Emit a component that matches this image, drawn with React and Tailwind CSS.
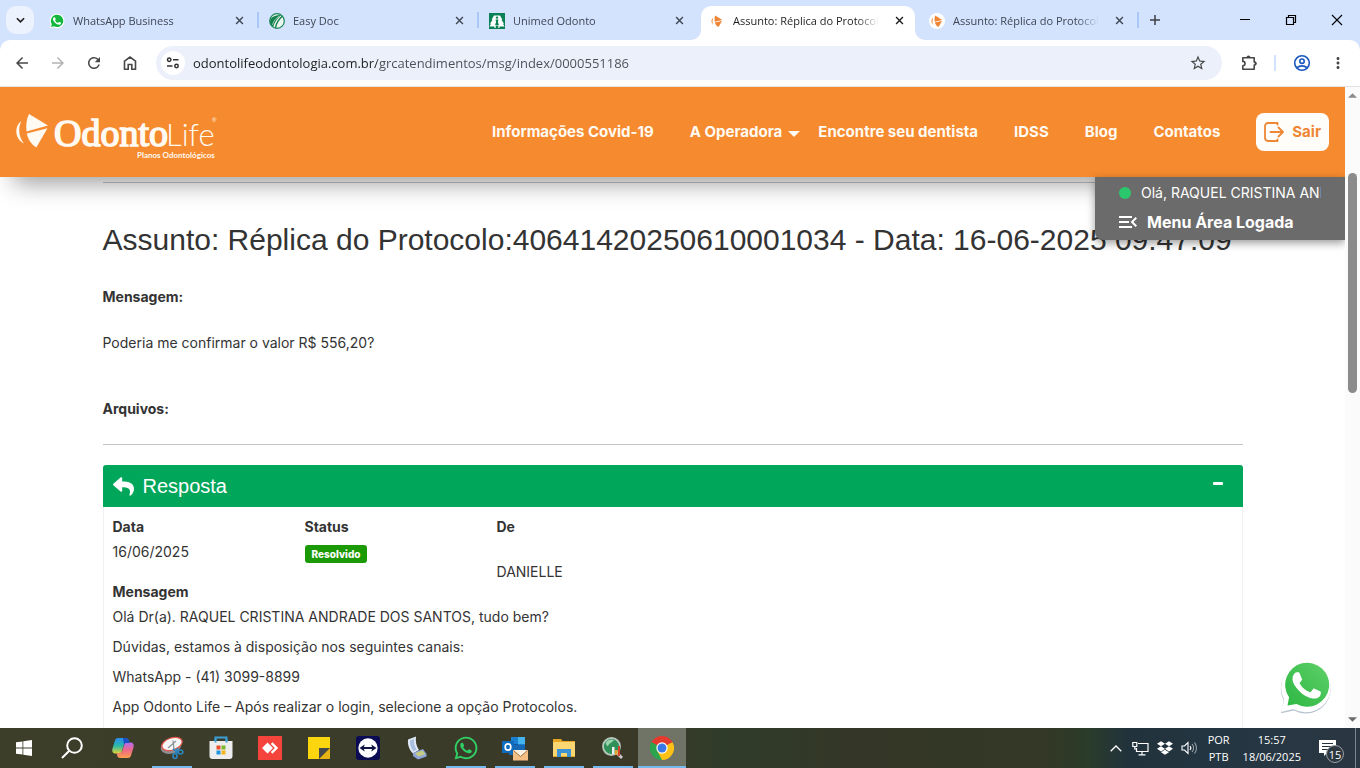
import React from "react";
import { MdArrowBack, MdArrowForward, MdRefresh, MdStarBorder, MdMoreVert, MdMenuOpen } from "react-icons/md";
import { FaReply, FaWhatsapp, FaDropbox } from "react-icons/fa";

const PHONE =
  "M17.472 14.382c-.297-.149-1.758-.867-2.03-.967-.273-.099-.471-.148-.67.15-.197.297-.767.966-.94 1.164-.173.199-.347.223-.644.075-.297-.15-1.255-.463-2.39-1.475-.883-.788-1.48-1.761-1.653-2.059-.173-.297-.018-.458.13-.606.134-.133.298-.347.446-.52.149-.174.198-.298.298-.497.099-.198.05-.371-.025-.52-.075-.149-.669-1.612-.916-2.207-.242-.579-.487-.5-.669-.51-.173-.008-.371-.01-.57-.01-.198 0-.52.074-.792.372-.272.297-1.04 1.016-1.04 2.479 0 1.462 1.065 2.875 1.213 3.074.149.198 2.096 3.2 5.077 4.487.709.306 1.262.489 1.694.625.712.227 1.36.195 1.871.118.571-.085 1.758-.719 2.006-1.413.248-.694.248-1.289.173-1.413-.074-.124-.272-.198-.57-.347";

function WhatsFavicon() {
  return (
    <svg viewBox="0 0 24 24" className="size-4 shrink-0">
      <path d="M1 23l1.6-5.6A11 11 0 1 1 6.6 21.400z" fill="#fff" />
      <path d="M3 21l1.200-4.300A9.300 9.300 0 1 1 7.400 19.800z" fill="#12b83e" />
      <path d={PHONE} fill="#fff" />
    </svg>
  );
}

function EasyFavicon() {
  return (
    <svg viewBox="0 0 16 16" className="size-4 shrink-0">
      <circle cx="8" cy="8" r="7.300" fill="#eaf5ef" stroke="#1c8756" strokeWidth="1.200" />
      <path d="M1 9C1 4 6 2 12 2C9 5 6 8 4.500 13.500C2 13 1 11 1 9z" fill="#14804c" />
      <path d="M13.500 3C10 6 7.500 9 6.500 14.800" stroke="#14804c" strokeWidth="1.500" fill="none" />
      <path d="M10.500 3C7 5 4.500 8 3.500 12" stroke="#b9dfcb" strokeWidth=".8" fill="none" />
    </svg>
  );
}

function UnimedFavicon() {
  return (
    <svg viewBox="0 0 16 16" className="size-4 shrink-0">
      <path d="M0 0h16v16H0z" fill="#0a8055" />
      <path d="M5 2.500h6l2.300 4-.8.400L15 10.500l-1 .3 1.500 2.700h-5V15h-5v-1.500h-5L2 10.800l-1-.3L3.500 6.900l-.8-.4z" fill="#fff" />
      <circle cx="8" cy="4.600" r="1.200" fill="#0a8055" />
      <path d="M6.500 6.500h3l-.6 2.500 1 3H6.100l1-3z" fill="#0a8055" />
      <path d="M6.700 12.500h2.600V15H6.700z" fill="#0a8055" />
    </svg>
  );
}

function ToothFavicon() {
  return (
    <svg viewBox="0 0 16 16" className="size-4 shrink-0">
      <circle cx="8" cy="8" r="8" fill="#fff" />
      <path d="M4.300 4.500C1.800 6.800 2 9.500 4 12C3.300 9.500 3.300 7 4.300 4.500z" fill="#ee8434" />
      <path d="M6.200 2.600L13.300 7 5.800 8.700C5.400 6.500 5.500 4.500 6.200 2.600z" fill="#ee8434" />
      <path d="M5.900 9.400L13 7.900 9.500 14C7.700 13 6.500 11.500 5.900 9.400z" fill="#ee8434" />
    </svg>
  );
}

function Cross({ className }) {
  return (
    <svg viewBox="0 0 10 10" className={className}>
      <path d="M1.200 1.200l7.600 7.600M8.800 1.200L1.200 8.800" stroke="currentColor" strokeWidth="1.600" fill="none" />
    </svg>
  );
}

const tabs = [
  { title: "WhatsApp Business", icon: <WhatsFavicon />, line: true },
  { title: "Easy Doc", icon: <EasyFavicon />, line: true },
  { title: "Unimed Odonto", icon: <UnimedFavicon /> },
  { title: "Assunto: Réplica do Protocolo", icon: <ToothFavicon />, active: true },
  { title: "Assunto: Réplica do Protocolo", icon: <ToothFavicon />, line: true },
];

function Tab({ tab }) {
  return (
    <>
      <div
        className={
          "relative flex h-[34px] w-[214px] min-w-0 items-center rounded-t-[10px] pb-[5px] pl-2 pr-[10px] " +
          (tab.active ? "bg-white text-[#1f1f1f]" : "text-[#3f4654]")
        }
      >
        {tab.active && (
          <>
            <svg viewBox="0 0 10 10" className="absolute -left-[10px] bottom-0 size-[10px]">
              <path d="M10 0v10H0A10 10 0 0 0 10 0z" fill="#fff" />
            </svg>
            <svg viewBox="0 0 10 10" className="absolute -right-[10px] bottom-0 size-[10px]">
              <path d="M0 0v10h10A10 10 0 0 1 0 0z" fill="#fff" />
            </svg>
          </>
        )}
        {tab.icon}
        <span className="ml-2 min-w-0 flex-1 overflow-hidden whitespace-nowrap [mask-image:linear-gradient(to_right,black_124px,transparent_146px)]">
          {tab.title}
        </span>
        <button type="button" aria-label="Fechar guia" className="ml-2 flex size-3 items-center justify-center">
          <Cross className="size-[9px]" />
        </button>
      </div>
      <div className="flex h-[34px] w-[6px] shrink-0 justify-center pt-[6px]">
        {tab.line && <span className="h-4 w-[2px] bg-[#a9c7f8]" />}
      </div>
    </>
  );
}

function BrowserChrome() {
  return (
    <div className="shrink-0 bg-[#d3e2fd] font-['Open_Sans',sans-serif]">
      <div className="flex h-10 items-start pl-[6px] pt-[6px] text-[11px] leading-4">
        <button type="button" aria-label="Pesquisar guias" className="mr-[7px] flex size-7 shrink-0 items-center justify-center rounded-[10px] bg-[#ecf2fe]">
          <svg viewBox="0 0 10 6" className="h-[6px] w-[9px]">
            <path d="M1 1l4 4 4-4" fill="none" stroke="#1f1f1f" strokeWidth="1.800" />
          </svg>
        </button>
        {tabs.map((t, i) => (
          <Tab key={i} tab={t} />
        ))}
        <button type="button" aria-label="Nova guia" className="ml-2 mt-2 flex size-3 shrink-0 items-center justify-center text-[#3c4043]">
          <svg viewBox="0 0 12 12" className="size-3">
            <path d="M6 1v10M1 6h10" stroke="currentColor" strokeWidth="1.500" />
          </svg>
        </button>
        <div className="ml-auto flex pt-2 text-black">
          <button type="button" aria-label="Minimizar" className="flex h-3 w-[46px] items-center justify-center">
            <svg viewBox="0 0 12 12" className="size-3"><path d="M1 5.500h10" stroke="currentColor" /></svg>
          </button>
          <button type="button" aria-label="Restaurar" className="flex h-3 w-[46px] items-center justify-center">
            <svg viewBox="0 0 12 12" className="size-3" fill="none" stroke="currentColor" strokeWidth="1.200">
              <path d="M1.500 3.500h7v7h-7zM3.500 3.500v-2h7v7h-2" />
            </svg>
          </button>
          <button type="button" aria-label="Fechar" className="flex h-3 w-[46px] items-center justify-center">
            <svg viewBox="0 0 12 12" className="size-3" fill="none" stroke="currentColor" strokeWidth="1.100">
              <path d="M1 1l10 10M11 1L1 11" />
            </svg>
          </button>
        </div>
      </div>

      <div className="flex h-[47px] items-center rounded-t-[10px] border-b border-[#e3e3e3] bg-white pl-[13px] pr-[13px] text-[#474747]">
        <button type="button" aria-label="Voltar"><MdArrowBack className="size-[18px]" /></button>
        <button type="button" aria-label="Avançar" className="ml-[18px] text-[#b3b3b3]"><MdArrowForward className="size-[18px]" /></button>
        <button type="button" aria-label="Recarregar" className="ml-[18px]"><MdRefresh className="size-[18px]" /></button>
        <button type="button" aria-label="Página inicial" className="ml-[18px]">
          <svg viewBox="0 0 18 18" className="size-[18px]" fill="none" stroke="currentColor" strokeWidth="1.600">
            <path d="M3.500 15.200V7.200L9 3l5.500 4.200v8h-3.700v-4.700H7.200v4.700z" />
          </svg>
        </button>
        <form className="ml-[17px] flex h-[34px] flex-1 items-center rounded-full bg-[#ebf0fa] pl-[5px] pr-[15px]" onSubmit={(e) => e.preventDefault()}>
          <button type="button" aria-label="Informações do site" className="flex size-6 items-center justify-center rounded-full bg-white">
            <svg viewBox="0 0 14 14" className="size-[14px]" fill="none" stroke="#303030" strokeWidth="1.500">
              <circle cx="3.200" cy="3.800" r="1.700" />
              <path d="M7 3.800h5.500M1 10h5.500" />
              <circle cx="10.500" cy="10" r="1.700" />
            </svg>
          </button>
          <input
            aria-label="Endereço"
            defaultValue="odontolifeodontologia.com.br/grcatendimentos/msg/index/0000551186"
            className="ml-2 min-w-0 flex-1 bg-[linear-gradient(to_right,#1f1f1f_184px,#4a4e55_184px)] bg-clip-text text-[13px] leading-5 text-transparent outline-none"
          />
          <button type="button" aria-label="Favoritar"><MdStarBorder className="size-[18px]" /></button>
        </form>
        <button type="button" aria-label="Extensões" className="ml-[18px]">
          <svg viewBox="0 0 18 18" className="size-[18px]">
            <path d="M2.800 3.800h11.400v4.200a1.500 1.500 0 0 1 0 3v4.200H2.800v-3.400a2.200 2.200 0 0 0 0-4.400z" fill="none" stroke="currentColor" strokeWidth="1.600" strokeLinejoin="round" />
            <path d="M6.500 3.500a2 2 0 0 1 4 0zM14.700 7.500a2 2 0 0 1 0 4z" fill="currentColor" />
          </svg>
        </button>
        <span className="ml-4 h-4 w-[2px] bg-[#d3e2fd]" />
        <button type="button" aria-label="Perfil" className="ml-[17px] text-[#1a57c0]">
          <svg viewBox="0 0 18 18" className="size-[18px]" fill="none" stroke="currentColor" strokeWidth="1.600">
            <circle cx="9" cy="9" r="7.300" />
            <circle cx="9" cy="7.200" r="2.200" />
            <path d="M4 13.700c2.800-2.500 7.200-2.500 10 0" />
          </svg>
        </button>
        <button type="button" aria-label="Mais" className="ml-[18px]"><MdMoreVert className="size-[18px]" /></button>
      </div>
    </div>
  );
}

function Logo() {
  return (
    <svg viewBox="16 102 204 60" className="h-[60px] w-[204px]" fill="#fffaf2" role="img" aria-label="OdontoLife Planos Odontológicos">
      <path d="M21.300 121C14 126.500 14.500 138.500 24 143.500C18.500 137 18 128 21.300 121z" />
      <path d="M29 114L48 125.500 26.500 131.500C25.800 125 26.500 119 29 114z" />
      <path d="M26.800 133.500L47.500 128.300 36.300 147.500C31.500 144.500 28 139.500 26.800 133.500z" />
      <text x="54" y="146" fontSize="38" className="font-['Liberation_Serif',serif]" stroke="#fffaf2" strokeWidth="1.600">Odonto</text>
      <text x="166" y="146" fontSize="31" className="font-['Lato',sans-serif] font-light">Life</text>
      <text x="212" y="122" fontSize="6" className="font-['Liberation_Sans',sans-serif]">®</text>
      <text x="137" y="158" fontSize="8" className="font-['Lato',sans-serif] font-bold">Planos Odontológicos</text>
    </svg>
  );
}

const navItems = ["Informações Covid-19", "A Operadora", "Encontre seu dentista", "IDSS", "Blog", "Contatos"];

function SiteHeader() {
  return (
    <header className="relative z-10 flex h-[90px] shrink-0 items-center bg-[#f68a2e] px-4 shadow-[0_20px_24px_-14px_rgba(0,0,0,0.4)]">
      <a href="#inicio"><Logo /></a>
      <nav className="ml-auto flex items-center text-[15px] font-bold leading-5 text-[#fffaf2]">
        {navItems.map((n) =>
          n === "A Operadora" ? (
            <a key={n} href="#operadora" className="mr-[18px] flex items-center">
              {n}
              <svg viewBox="0 0 12 6" className="ml-[6px] mt-[3px] h-[6px] w-3"><path d="M0 0h12L6 6z" fill="currentColor" /></svg>
            </a>
          ) : (
            <a key={n} href="#item" className="mr-9 whitespace-nowrap">{n}</a>
          )
        )}
      </nav>
      <button type="button" className="flex h-[38px] items-center gap-2 rounded-[8px] bg-[#fffdfa] px-2 text-[15px] font-bold text-[#ee8633]">
        <svg viewBox="0 0 20 20" className="size-5" fill="none" stroke="currentColor" strokeWidth="1.800" strokeLinecap="round" strokeLinejoin="round">
          <path d="M13.500 1H4.200A3.200 3.200 0 0 0 1 4.200v11.600A3.200 3.200 0 0 0 4.200 19h9.300M13.500 1v1.500M13.500 19v-1.500M6.500 10h12.300M14.500 5.500L19 10l-4.500 4.500" />
        </svg>
        Sair
      </button>

      <div className="absolute right-0 top-full w-[250px] rounded-bl-[8px] bg-[#6b6b6b] pb-[6px] pl-6 pr-6 pt-[6px] text-white shadow-[0_3px_8px_rgba(0,0,0,0.4)]">
        <div className="flex items-center">
          <span className="size-3 shrink-0 rounded-full bg-[#2bc76c]" />
          <span className="ml-[10px] overflow-hidden whitespace-nowrap text-[14px] leading-5">Olá, RAQUEL CRISTINA ANDRADE</span>
        </div>
        <button type="button" className="mt-[7px] flex items-center text-[16px] font-bold leading-6">
          <MdMenuOpen className="-ml-[3px] mr-[7px] size-6" />
          Menu Área Logada
        </button>
      </div>
    </header>
  );
}

function WhatsFloat() {
  return (
    <svg viewBox="0 0 52 54" className="h-[54px] w-[52px]">
      <defs>
        <linearGradient id="wf" x1="0" y1="1" x2="1" y2="0">
          <stop offset="0" stopColor="#2cb742" />
          <stop offset="1" stopColor="#5fd068" />
        </linearGradient>
      </defs>
      <path d="M1 52.300l2.700-13A25 25 0 1 1 14 49.600z" fill="#b9c3cf" />
      <path d="M1 51l3.200-12.500A24.800 24.800 0 1 1 13.500 48z" fill="#fff" />
      <path d="M7.500 44.500l1.600-8.200A22 22 0 1 1 16.500 43z" fill="url(#wf)" />
      <path d={PHONE} transform="translate(-1.600 -3.800) scale(2.350)" fill="#fff" />
    </svg>
  );
}

const message = [
  "Olá Dr(a). RAQUEL CRISTINA ANDRADE DOS SANTOS, tudo bem?",
  "Dúvidas, estamos à disposição nos seguintes canais:",
  "WhatsApp - (41) 3099-8899",
  "App Odonto Life – Após realizar o login, selecione a opção Protocolos.",
];

function Page() {
  return (
    <div className="relative flex min-w-0 flex-1 flex-col overflow-hidden bg-white font-['Inter',sans-serif] text-[14px] leading-5 text-[#333]">
      <SiteHeader />
      <main className="mx-auto w-full max-w-[1140px] shrink-0 pt-[5px]">
        <hr className="border-[#c4c4c4]" />
        <h1 className="mt-10 whitespace-nowrap font-['Liberation_Sans',sans-serif] text-[30px] leading-[33px]">
          Assunto: Réplica do Protocolo:40641420250610001034 - Data: 16-06-2025 09:47:09
        </h1>
        <h2 className="mt-[31px] font-bold">Mensagem:</h2>
        <p className="mt-[26px]">Poderia me confirmar o valor R$ 556,20?</p>
        <h2 className="mt-[46px] font-bold">Arquivos:</h2>
        <hr className="mt-[25px] border-[#c4c4c4]" />
        <section className="mt-5 rounded-[3px] border-x border-[#f1f1f1]">
          <div className="-mx-px flex h-[42px] items-center rounded-t-[3px] bg-[#00a65a] pl-[10px] pr-[20px] text-white">
            <FaReply className="size-[21px]" />
            <h3 className="ml-[9px] font-['Liberation_Sans',sans-serif] text-[20px] leading-6">Resposta</h3>
            <button type="button" aria-label="Recolher" className="ml-auto pb-[6px]">
              <span className="block h-[3px] w-[10px] rounded-[1px] bg-white" />
            </button>
          </div>
          <div className="px-[9px] pb-10 pt-[10px]">
            <dl className="grid h-[65px] grid-cols-[192px_192px_1fr]">
              <div>
                <dt className="font-bold">Data</dt>
                <dd className="mt-[5px]">16/06/2025</dd>
              </div>
              <div>
                <dt className="font-bold">Status</dt>
                <dd className="mt-2 flex">
                  <span className="rounded-[3px] bg-[#1c9a05] px-[7px] text-[10px] font-extrabold leading-[18px] text-white">Resolvido</span>
                </dd>
              </div>
              <div>
                <dt className="font-bold">De</dt>
                <dd className="mt-[25px]">DANIELLE</dd>
              </div>
            </dl>
            <h4 className="font-bold">Mensagem</h4>
            {message.map((m) => (
              <p key={m} className="leading-[30px]">{m}</p>
            ))}
          </div>
        </section>
      </main>
      <a href="#whatsapp" aria-label="WhatsApp" className="absolute bottom-[13px] right-[13px]"><WhatsFloat /></a>
    </div>
  );
}

function Scrollbar() {
  return (
    <div className="flex w-[15px] shrink-0 flex-col items-center bg-[#fbfbfb] py-[6px]">
      <svg viewBox="0 0 10 5" className="h-[5px] w-[9px] shrink-0"><path d="M0 5l5-5 5 5z" fill="#8b8b8b" /></svg>
      <div className="flex w-full flex-1 flex-col items-center">
        <div className="flex-[75]" />
        <div className="w-[9px] flex-[220] rounded-full bg-[#8b8b8b]" />
        <div className="flex-[324]" />
      </div>
      <svg viewBox="0 0 10 5" className="h-[5px] w-[9px] shrink-0"><path d="M0 0h10L5 5z" fill="#6b6b6b" /></svg>
    </div>
  );
}

const I = ({ children }) => <svg viewBox="0 0 24 24" className="size-6">{children}</svg>;

const apps = [
  {
    name: "Copilot",
    icon: (
      <I>
        <defs>
          <linearGradient id="ca" x1="0" y1="0" x2="0" y2="1"><stop offset="0" stopColor="#2b8df0" /><stop offset=".5" stopColor="#28b8a8" /><stop offset="1" stopColor="#e3d435" /></linearGradient>
          <linearGradient id="cb" x1="0" y1="0" x2="0" y2="1"><stop offset="0" stopColor="#b46af0" /><stop offset=".5" stopColor="#ef6a86" /><stop offset="1" stopColor="#f9a14c" /></linearGradient>
        </defs>
        <path d="M7 2h8c1.500 0 2.300 1 2.700 2.300L18.500 7h-3c-1.500 0-2.300.8-2.800 2.200l-2 6.300c-.4 1.200-1.200 2-2.500 2H4.500C1.500 17.500.8 15 1.500 12.500l2.300-7.500C4.400 3 5.300 2 7 2z" fill="url(#ca)" />
        <path d="M17 22H9c-1.500 0-2.300-1-2.700-2.300L5.500 17h3c1.500 0 2.300-.8 2.800-2.200l2-6.300c.4-1.200 1.200-2 2.500-2h3.700c3 0 3.700 2.500 3 5l-2.300 7.500C19.600 21 18.700 22 17 22z" fill="url(#cb)" />
        <path d="M12 2h3c1.500 0 2.300 1 2.700 2.300L18.500 7h-3c-1.300 0-2 .5-2.500 1.500z" fill="#1b4fc4" />
      </I>
    ),
  },
  {
    name: "Ferramenta de Captura",
    running: true,
    icon: (
      <I>
        <ellipse cx="11" cy="10.500" rx="10.500" ry="7" transform="rotate(-18 11 10.500)" fill="#8c8f93" />
        <ellipse cx="12" cy="8" rx="10.500" ry="6" transform="rotate(-18 12 8)" fill="#f6f6f6" stroke="#e2564c" strokeWidth="1.200" />
        <path d="M13 4.500l1 9M8 12l8-7" stroke="#8b949c" strokeWidth="1.300" />
        <path d="M13 13l6 4M17.500 12l-2 6" stroke="#2b86c2" strokeWidth="1.600" />
        <ellipse cx="20.500" cy="16" rx="2.300" ry="2" fill="none" stroke="#2b86c2" strokeWidth="1.600" />
        <ellipse cx="15" cy="20" rx="2" ry="2.500" fill="none" stroke="#2b86c2" strokeWidth="1.600" />
      </I>
    ),
  },
  {
    name: "Microsoft Store",
    icon: (
      <I>
        <path d="M6.500 6V1.500h11V6" fill="none" stroke="#3aa0d8" strokeWidth="2" />
        <path d="M.5 5h23v15a3 3 0 0 1-3 3h-17a3 3 0 0 1-3-3z" fill="#ededed" />
        <path d="M6.500 3v3.500M17.500 3v3.500" stroke="#3aa0d8" strokeWidth="2" />
        <path d="M7.500 9.500h4v4h-4z" fill="#e8502a" /><path d="M12.500 9.500h4v4h-4z" fill="#7db52b" />
        <path d="M7.500 14.500h4v4h-4z" fill="#1d96dc" /><path d="M12.500 14.500h4v4h-4z" fill="#f5b61a" />
      </I>
    ),
  },
  {
    name: "AnyDesk",
    icon: (
      <I>
        <path d="M0 0h24v24H0z" fill="#f5443b" />
        <path d="M9.500 6.500L15 12l-5.500 5.500L4 12zM12.800 8l1.700-1.700L20.200 12l-5.700 5.700-1.700-1.700 4-4z" fill="#fff" />
      </I>
    ),
  },
  {
    name: "Notas Autoadesivas",
    icon: (
      <I>
        <path d="M1 1h22v11H12v11H1z" fill="#fbd50e" />
        <path d="M12 12h11L12 23z" fill="#45494b" />
        <path d="M23 12v10a1 1 0 0 1-1 1H12z" fill="#e8b414" />
      </I>
    ),
  },
  {
    name: "TeamViewer",
    icon: (
      <I>
        <rect width="24" height="24" rx="3" fill="#0b0c54" />
        <circle cx="12" cy="12" r="9.700" fill="#fff" />
        <path d="M3.500 12l5.200-3.500-.7 2.500h8l-.7-2.500L20.500 12l-5.200 3.500.7-2.500H8l.7 2.500z" fill="#101242" />
      </I>
    ),
  },
  {
    name: "Scanner",
    icon: (
      <I>
        <path d="M3 3.500L11 .5c-.5 5 0 9 3 13.500L8 17.500C4 13.500 2.500 9 3 3.500z" fill="#dfe8f5" />
        <path d="M5 4.500l4-1.500c-.3 4 .5 7 2.500 10.500L8.500 15.300C6 12 4.800 8.500 5 4.500z" fill="#a9bfe0" />
        <path d="M8 17l10-4 3.500 5v2.500L13 23.500 8 20z" fill="#8fa5da" />
        <path d="M10 17.200l7.500-2.800 2.700 3.800L13.500 20.500z" fill="#c6cd80" />
      </I>
    ),
  },
  { name: "WhatsApp", running: true, icon: <FaWhatsapp className="size-[26px] text-[#2fd065]" /> },
  {
    name: "Outlook",
    running: true,
    icon: (
      <svg viewBox="0 0 26 26" className="size-[26px]">
        <path d="M9 2h14v14H9z" fill="#1a7fd0" /><path d="M16 2h7v7h-7z" fill="#45b4ee" /><path d="M9 9h7v7H9z" fill="#0c57a0" />
        <path d="M7 10h16v10H7z" fill="#1668b5" />
        <path d="M0 6h12v12H0z" fill="#0f6cbd" />
        <ellipse cx="6" cy="12" rx="2.800" ry="3.200" fill="none" stroke="#fff" strokeWidth="1.700" />
        <path d="M11 15h15v10.500H11z" fill="#f4bf85" />
        <path d="M11 15h15l-7.500 6.500z" fill="#fdf1e1" /><path d="M11.500 15.500l7 6 7-6" fill="none" stroke="#8d5a25" strokeWidth=".8" />
      </svg>
    ),
  },
  {
    name: "Explorador de Arquivos",
    running: true,
    icon: (
      <svg viewBox="0 0 22 20" className="h-5 w-[22px]">
        <path d="M0 1h8l1.500 2H22v16H0z" fill="#e8a723" />
        <path d="M0 4h22v14H0z" fill="#fcd670" />
        <path d="M4 19v-8h14v8h-4v-4H8v4z" fill="#3b93d6" />
      </svg>
    ),
  },
  {
    name: "Monitor",
    running: true,
    icon: (
      <I>
        <circle cx="10.500" cy="10.500" r="8.500" fill="#2f9158" stroke="#b6c8bd" strokeWidth="1.800" />
        <path d="M5 6c3-3 6-3 8-2-2 3-5 3-6 6-2 0-2-2-2-4z" fill="#9bd3ae" />
        <path d="M16 17l5 5" stroke="#c8c8c8" strokeWidth="3" />
        <path d="M11 11h2.500v7H11z" fill="#f2f2f2" /><path d="M14 14h2.500v5H14z" fill="#e5a42c" /><path d="M17 10h2v10h-2z" fill="#d8432f" />
      </I>
    ),
  },
  {
    name: "Google Chrome",
    running: true,
    active: true,
    icon: (
      <I>
        <path d="M12 12L1.600 6A12 12 0 0 1 22.400 6z" fill="#e33b2e" />
        <path d="M12 12L22.400 6A12 12 0 0 1 12 24z" fill="#fbc116" />
        <path d="M12 12L12 24A12 12 0 0 1 1.600 6z" fill="#2da44e" />
        <path d="M12 6.500h10.700L22.400 6H12z" fill="#e33b2e" />
        <path d="M7.200 14.800L12 24l5-9z" fill="#fbc116" />
        <path d="M1.600 6l5.300 9.200L12 12z" fill="#2da44e" />
        <path d="M12 6.500V12L1.600 6z" fill="#e33b2e" />
        <circle cx="12" cy="12" r="5.700" fill="#fff" />
        <circle cx="12" cy="12" r="4.500" fill="#3b78e7" />
      </I>
    ),
  },
];

function Taskbar() {
  return (
    <footer className="flex h-10 shrink-0 items-stretch bg-[linear-gradient(to_right,#3c3e2a_0%,#3a3928_48%,#2f3c29_53%,#343727_62%,#343826_77%,#2a3c2a_80%,#22323c_83%,#243642_90%,#2b3743_100%)] font-['Open_Sans',sans-serif] text-[11px] text-white">
      <button type="button" aria-label="Iniciar" className="flex w-12 items-center justify-center">
        <svg viewBox="0 0 16 16" className="size-4" fill="#fff">
          <path d="M0 2.300l6.500-.9v6.200H0zM7.300 1.300L16 0v7.600H7.300zM0 8.400h6.500v6.200L0 13.700zM7.300 8.400H16V16l-8.700-1.300z" />
        </svg>
      </button>
      <button type="button" aria-label="Pesquisar" className="mr-[3px] flex w-12 items-center justify-center">
        <svg viewBox="0 0 22 22" className="size-[22px]" fill="none" stroke="#fff" strokeWidth="2">
          <circle cx="13.500" cy="8.500" r="7.300" />
          <path d="M8.300 13.700L1 21" />
        </svg>
      </button>
      <div className="flex gap-px">
        {apps.map((a) => (
          <button
            key={a.name}
            type="button"
            aria-label={a.name}
            className={"relative flex w-12 items-center justify-center " + (a.active ? "bg-[#6f7466]" : "")}
          >
            {a.icon}
            {a.running && (
              <span className={"absolute bottom-0 h-[2px] bg-[#76b9ed] " + (a.active ? "inset-x-0" : "inset-x-1")} />
            )}
          </button>
        ))}
      </div>
      <div className="ml-auto flex items-center">
        <button type="button" aria-label="Mostrar ícones ocultos">
          <svg viewBox="0 0 12 7" className="h-[7px] w-3"><path d="M.7 6.300L6 1l5.300 5.300" fill="none" stroke="#fff" strokeWidth="1.300" /></svg>
        </button>
        <svg viewBox="0 0 17 15" className="ml-[10px] h-[15px] w-[17px]" fill="none" stroke="#fff" strokeWidth="1.200">
          <path d="M6 2.500h10v8H4.500V7M10 10.500v3M6.500 13.800h7M.8 1.500h4v4h-4zM2.800 5.500v2.500h2" />
        </svg>
        <FaDropbox className="ml-2 size-4" />
        <svg viewBox="0 0 17 14" className="ml-2 h-[14px] w-[17px]" fill="none" stroke="#fff" strokeWidth="1.100">
          <path d="M1 5h2.500L7 1.500v11L3.500 9H1zM9 5a3 3 0 0 1 0 4" />
          <path d="M11 3a6 6 0 0 1 0 8M13.500 1.500a9 9 0 0 1 0 11" stroke="#a4adb4" />
        </svg>
        <div className="ml-[10px] text-center leading-[17px]"><div>POR</div><div>PTB</div></div>
        <time className="ml-[13px] text-center leading-[17px]"><div>15:57</div><div>18/06/2025</div></time>
        <button type="button" aria-label="Notificações" className="relative ml-[18px] mr-[19px]">
          <svg viewBox="0 0 17 16" className="h-4 w-[17px]">
            <path d="M0 0h17v13H8l-3 3v-3H0z" fill="#fff" />
            <path d="M3 3.500h11M3 6.500h11M3 9.500h7" stroke="#25323c" strokeWidth="1.200" />
          </svg>
          <span className="absolute -bottom-[7px] -right-2 flex size-[18px] items-center justify-center rounded-full border border-[#9aa1a6] bg-[#2d3740] text-[11px] leading-none">15</span>
        </button>
      </div>
      <span className="mr-1 w-px bg-[#7c858d]" />
    </footer>
  );
}

export default function App() {
  return (
    <div className="flex h-screen flex-col overflow-hidden bg-white">
      <BrowserChrome />
      <div className="flex min-h-0 flex-1">
        <Page />
        <Scrollbar />
      </div>
      <Taskbar />
    </div>
  );
}
